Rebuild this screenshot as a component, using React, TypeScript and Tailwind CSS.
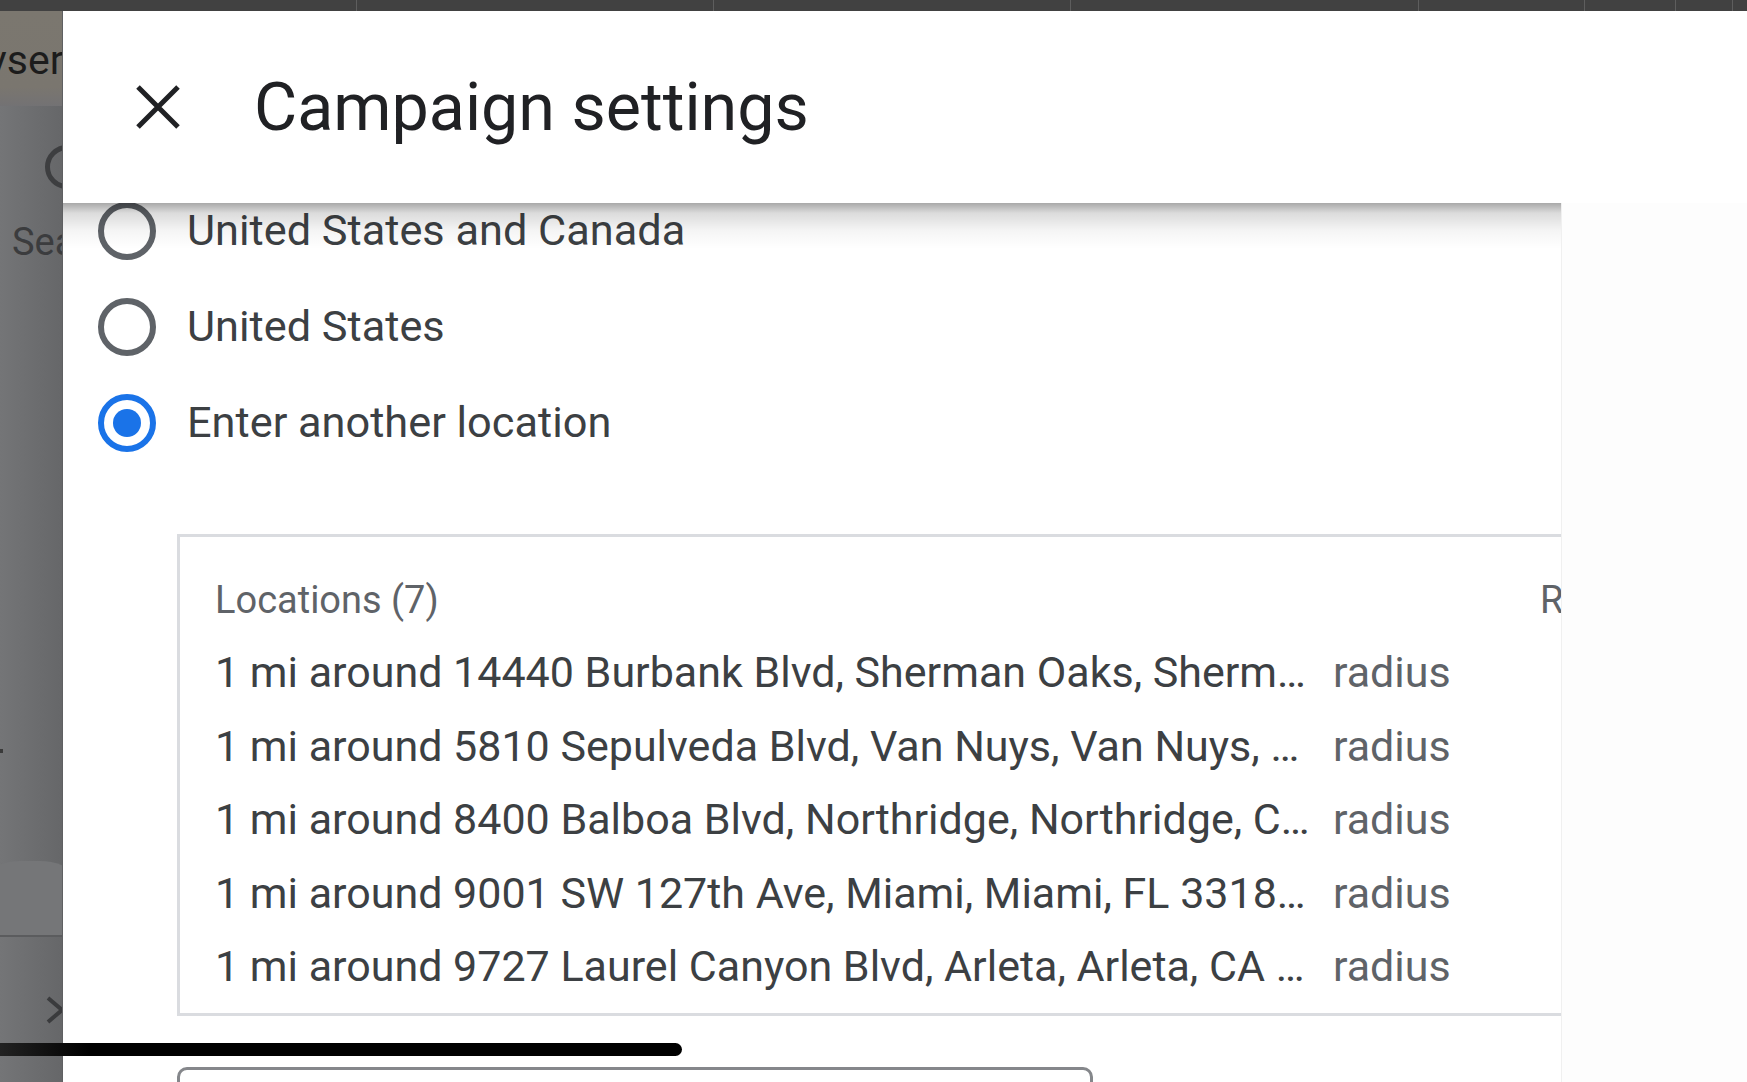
import React from "react";

const rows = [
  "1 mi around 14440 Burbank Blvd, Sherman Oaks, Sherm…",
  "1 mi around 5810 Sepulveda Blvd, Van Nuys, Van Nuys, …",
  "1 mi around 8400 Balboa Blvd, Northridge, Northridge, C…",
  "1 mi around 9001 SW 127th Ave, Miami, Miami, FL 3318…",
  "1 mi around 9727 Laurel Canyon Blvd, Arleta, Arleta, CA …",
];

function Radio({ checked }: { checked?: boolean }) {
  return (
    <div
      className={
        checked
          ? "flex h-[58px] w-[58px] shrink-0 items-center justify-center rounded-full border-[6px] border-[#1a73e8]"
          : "flex h-[58px] w-[58px] shrink-0 items-center justify-center rounded-full border-[6px] border-[#5f6368]"
      }
    >
      {checked && <div className="h-[28px] w-[28px] rounded-full bg-[#1a73e8]" />}
    </div>
  );
}

function Strip() {
  return (
    <div className="relative w-[63px] shrink-0 overflow-hidden border-r border-[#5f6062] bg-[linear-gradient(to_right,#747577,#666769)]">
      <div className="h-[95px] bg-[linear-gradient(to_bottom,#7b776f,#7a766f_80%,#737274)]" />
      <div className="absolute left-[-13px] top-[29px] whitespace-nowrap text-[41px] leading-none text-[#1c1c1c]">vser</div>
      <div className="absolute left-[45px] top-[134px] h-[44px] w-[44px] rounded-full border-[5px] border-[#3d3e40]" />
      <div className="absolute left-[12px] top-[212px] whitespace-nowrap text-[38px] leading-none text-[#3b3c3e]">Sea</div>
      <div className="absolute left-[-2px] top-[738px] h-[4px] w-[5px] bg-[#3a3a3a]" />
      <div className="absolute left-[-40px] top-[850px] h-[75px] w-[140px] rounded-t-[60px] bg-[#757678]" />
      <div className="absolute left-0 top-[924px] h-[2px] w-full bg-[#5b5c5e]" />
      <svg className="absolute left-[45px] top-[985px]" width="22" height="28" viewBox="0 0 22 28">
        <path d="M3 2 L17 14 L3 26" fill="none" stroke="#3a3b3d" strokeWidth="4" />
      </svg>
    </div>
  );
}

export default function App() {
  return (
    <div className="relative flex h-[1082px] w-[1747px] flex-col overflow-hidden bg-white font-[family-name:Roboto,sans-serif]">
      <div className="flex h-[11px] shrink-0 bg-[#414141]">
        <div className="w-[357px] border-r border-[#5e5e5e]" />
        <div className="w-[357px] border-r border-[#5e5e5e]" />
        <div className="w-[357px] border-r border-[#5e5e5e]" />
        <div className="w-[348px] border-r border-[#5e5e5e]" />
        <div className="w-[166px] border-r border-[#5e5e5e]" />
        <div className="w-[91px] border-r border-[#5e5e5e]" />
        <div className="w-[57px] border-r border-[#5e5e5e]" />
        <div className="flex-1" />
      </div>

      <div className="flex min-h-0 flex-1">
        <Strip />
        <div className="flex min-w-0 flex-1 flex-col bg-white">
          <header className="flex h-[192px] shrink-0 items-center">
            <svg className="ml-[72px] shrink-0" width="46" height="46" viewBox="0 0 46 46">
              <path d="M3 3 L43 43 M43 3 L3 43" stroke="#202124" strokeWidth="5" fill="none" />
            </svg>
            <h1 className="ml-[73px] whitespace-nowrap text-[66.4px] font-normal leading-none text-[#202124]">
              Campaign settings
            </h1>
          </header>

          <div className="flex min-h-0 flex-1">
            <div className="relative w-[1498px] shrink-0 overflow-hidden">
              <div className="-mt-[20px]">
                <div className="pl-[35px]">
                  <div className="flex h-[96px] items-center">
                    <Radio />
                    <span className="ml-[31px] whitespace-nowrap text-[43.3px] leading-none text-[#3c4043]">United States and Canada</span>
                  </div>
                  <div className="flex h-[96px] items-center">
                    <Radio />
                    <span className="ml-[31px] whitespace-nowrap text-[43.3px] leading-none text-[#3c4043]">United States</span>
                  </div>
                  <div className="flex h-[96px] items-center">
                    <Radio checked />
                    <span className="ml-[31px] whitespace-nowrap text-[43.3px] leading-none text-[#3c4043]">Enter another location</span>
                  </div>
                </div>

                <div className="ml-[114px] mt-[63px] h-[482px] w-[1500px] border-[3px] border-[#dadce0] pl-[35px] pt-[41px]">
                  <div className="grid grid-cols-[1095px_184px_auto] gap-x-[23px]">
                    <div className="flex h-[44px] items-center whitespace-nowrap text-[38px] leading-none text-[#5f6368]">Locations (7)</div>
                    <div />
                    <div className="flex h-[44px] items-center whitespace-nowrap text-[38px] leading-none text-[#5f6368]">Reach</div>
                  </div>
                  <div className="mt-[14px] grid grid-cols-[1095px_184px_auto] gap-x-[23px]">
                    {rows.map((r) => (
                      <React.Fragment key={r}>
                        <div className="flex h-[73.5px] items-center overflow-hidden whitespace-nowrap text-[43px] leading-none text-[#3c4043]">{r}</div>
                        <div className="flex h-[73.5px] items-center whitespace-nowrap text-[43px] leading-none text-[#5f6368]">radius</div>
                        <div />
                      </React.Fragment>
                    ))}
                  </div>
                </div>

                <div className="ml-[114px] mt-[51px] h-[90px] w-[916px] rounded-[10px] border-[3px] border-[#85878b]" />
              </div>

              <div className="pointer-events-none absolute inset-x-0 top-0 h-[46px] bg-[linear-gradient(to_bottom,rgba(0,0,0,0.34),rgba(0,0,0,0.14)_10px,rgba(0,0,0,0.04)_28px,rgba(0,0,0,0)_46px)]" />
            </div>
            <div className="flex-1 border-l border-[#f0f0f0] bg-[#fdfdfd]" />
          </div>
        </div>
      </div>

      <div className="absolute left-0 top-[1043px] h-[13px] w-[682px] rounded-r-full bg-[linear-gradient(to_right,#222_0px,#000_90px,#000_100%)]" />
    </div>
  );
}
